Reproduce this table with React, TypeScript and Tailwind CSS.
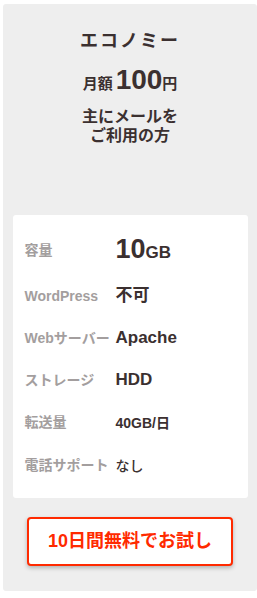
import React from "react";

const font = { fontFamily: '"Liberation Sans", "Noto Sans CJK JP", sans-serif' };

const rows: { label: string; h: string; value: React.ReactNode }[] = [
  {
    label: "容量",
    h: "h-[50px]",
    value: (
      <span className="font-bold leading-none">
        <span className="text-[27px]">10</span>
        <span className="text-[17px]">GB</span>
      </span>
    ),
  },
  { label: "WordPress", h: "h-[42px]", value: <span className="text-[17px] font-bold">不可</span> },
  { label: "Webサーバー", h: "h-[42px]", value: <span className="text-[17px] font-bold">Apache</span> },
  { label: "ストレージ", h: "h-[42px]", value: <span className="text-[17px] font-bold">HDD</span> },
  { label: "転送量", h: "h-[43px]", value: <span className="text-[14px] font-bold">40GB/日</span> },
  { label: "電話サポート", h: "h-[43px]", value: <span className="text-[14px] font-medium">なし</span> },
];

export default function App() {
  return (
    <div className="w-[257px] h-[598px] bg-white pt-[4px] pl-[3px]" style={font}>
      <div className="w-[254px] h-[587px] bg-[#eeeeee] rounded-[3px] flex flex-col items-center text-[#3b3030]">
        <div className="mt-[26px] text-[18px] font-bold leading-[22px] tracking-[2px]">エコノミー</div>
        <div className="mt-[14px] flex items-baseline leading-none">
          <span className="text-[15px] font-bold mr-[3px]">月額</span>
          <span className="text-[28px] font-bold">100</span>
          <span className="text-[15px] font-bold">円</span>
        </div>
        <div className="mt-[13px] text-[16px] font-bold leading-[19px] text-center">
          主にメールを
          <br />
          ご利用の方
        </div>
        <div className="mt-[70px] w-[235px] bg-white rounded-[3px] pt-[10px] pb-[11px] pl-[12px]">
          {rows.map((r) => (
            <div key={r.label} className={`${r.h} flex items-center`}>
              <div className="w-[91px] shrink-0 text-[14px] font-semibold text-[#a39e9e] whitespace-nowrap">
                {r.label}
              </div>
              <div className="text-[#3b3030]">{r.value}</div>
            </div>
          ))}
        </div>
        <button className="mt-[19px] w-[206px] h-[49px] bg-white border-2 border-[#ff2a00] rounded-[4px] shadow-[0_2px_4px_rgba(0,0,0,0.25)] text-[#ff2a00] text-[18px] font-bold">
          10日間無料でお試し
        </button>
      </div>
    </div>
  );
}
